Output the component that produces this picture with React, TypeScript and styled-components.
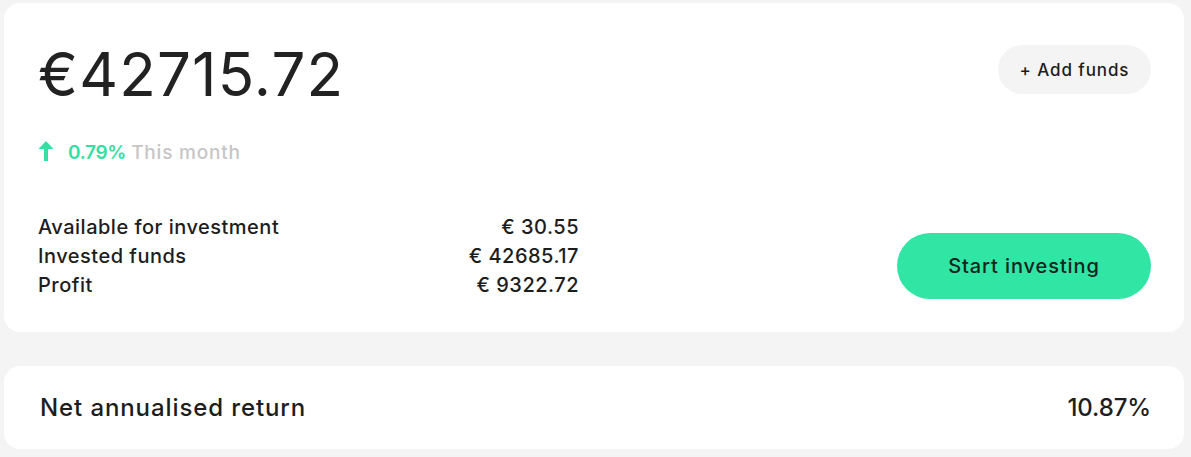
import React from "react";
import styled, { createGlobalStyle } from "styled-components";

const Global = createGlobalStyle`
  html, body { margin: 0; padding: 0; background: #f4f4f4; }
  body { font-family: Inter, "Noto Sans", sans-serif; color: #1d1d1d; }
  * { box-sizing: border-box; }
`;

const Page = styled.div`
  display: flex;
  flex-direction: column;
  gap: 34px;
  padding: 3px 7px 0 4px;
`;

const Card = styled.section`
  background: #fff;
  border-radius: 16px;
`;

const MainCard = styled(Card)`
  display: flex;
  flex-direction: column;
  padding: 33px 33px 32px 34px;
  height: 329px;
`;

const TopRow = styled.div`
  display: flex;
  justify-content: space-between;
  align-items: flex-start;
`;

const Amount = styled.h1`
  margin: 0;
  font-size: 60px;
  font-weight: 400;
  line-height: 76px;
  color: #222;
  letter-spacing: 1.2px;
`;

const PillButton = styled.button<{ $variant?: "soft" | "primary" }>`
  border: none;
  border-radius: 999px;
  font-family: inherit;
  font-weight: 500;
  letter-spacing: 0.9px;
  cursor: pointer;
  background: ${(p) => (p.$variant === "primary" ? "#31e5a5" : "#f4f4f4")};
  color: ${(p) => (p.$variant === "primary" ? "#16241e" : "#1d1d1d")};
  font-size: ${(p) => (p.$variant === "primary" ? "20px" : "17px")};
  height: ${(p) => (p.$variant === "primary" ? "66px" : "49px")};
  width: ${(p) => (p.$variant === "primary" ? "254px" : "153px")};
  margin-top: ${(p) => (p.$variant === "primary" ? "0" : "9px")};
  align-self: ${(p) => (p.$variant === "primary" ? "flex-end" : "auto")};
  margin-bottom: ${(p) => (p.$variant === "primary" ? "1px" : "0")};
`;

const Change = styled.div`
  display: flex;
  align-items: center;
  margin-top: 28px;
  font-size: 19px;
  height: 24px;
`;

const ArrowIcon = styled.svg`
  width: 16px;
  height: 20px;
  margin: 0 14px 2px 0;
`;

const Up = styled.span`
  color: #31e0a2;
  font-weight: 600;
  letter-spacing: -0.3px;
  margin-right: 5px;
`;

const Muted = styled.span`
  color: #c6c6c6;
  font-weight: 500;
  letter-spacing: 0.8px;
`;

const BottomRow = styled.div`
  display: flex;
  justify-content: space-between;
  align-items: center;
  margin-top: auto;
`;

const Stats = styled.dl`
  margin: 0;
  display: grid;
  grid-template-columns: 1fr auto;
  width: 541px;
  row-gap: 0;
  font-size: 20px;
  font-weight: 500;
  line-height: 29px;
  letter-spacing: 0.5px;
`;

const Label = styled.dt`
  margin: 0;
`;

const Value = styled.dd`
  margin: 0;
  text-align: right;
`;

const ReturnCard = styled(Card)`
  display: flex;
  justify-content: space-between;
  align-items: center;
  height: 83px;
  padding: 0 33px 0 36px;
  font-size: 24px;
  font-weight: 500;
`;

const ReturnLabel = styled.span`
  letter-spacing: 0.9px;
`;

const ReturnValue = styled.span`
  letter-spacing: -0.1px;
`;

const stats = [
  ["Available for investment", "€ 30.55"],
  ["Invested funds", "€ 42685.17"],
  ["Profit", "€ 9322.72"],
];

export default function App() {
  return (
    <>
      <Global />
      <Page>
        <MainCard>
          <TopRow>
            <Amount>€42715.72</Amount>
            <PillButton>+ Add funds</PillButton>
          </TopRow>
          <Change>
            <ArrowIcon viewBox="0 0 16 20">
              <path d="M8 0 L15.5 8 H10 V20 H6 V8 H0.5 Z" fill="#31e0a2" />
            </ArrowIcon>
            <Up>0.79%</Up>
            <Muted>This month</Muted>
          </Change>
          <BottomRow>
            <Stats>
              {stats.map(([l, v]) => (
                <React.Fragment key={l}>
                  <Label>{l}</Label>
                  <Value>{v}</Value>
                </React.Fragment>
              ))}
            </Stats>
            <PillButton $variant="primary">Start investing</PillButton>
          </BottomRow>
        </MainCard>
        <ReturnCard>
          <ReturnLabel>Net annualised return</ReturnLabel>
          <ReturnValue>10.87%</ReturnValue>
        </ReturnCard>
      </Page>
    </>
  );
}
